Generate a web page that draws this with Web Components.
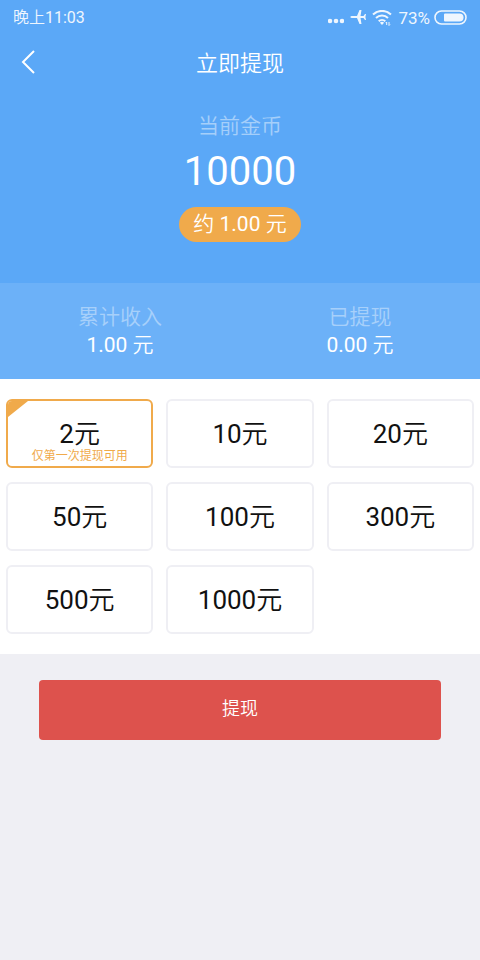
<!DOCTYPE html>
<html lang="zh-CN">
<head>
<meta charset="utf-8">
<meta name="viewport" content="width=device-width, initial-scale=1">
<title>立即提现</title>
<style>
  html { background: #efeff4; }
  body {
    margin: 0;
    font-family: Roboto, "Noto Sans CJK SC DemiLight", "Noto Sans CJK SC", sans-serif;
    color: #111;
    --blue: #5ba8f7;
    --blue-light: #6cb1f8;
    --orange: #f0aa4b;
    --line: #efeff4;
    --red: #dd524d;
  }
</style>
</head>
<body>
<withdraw-page></withdraw-page>
<script>
  function define(name, html, setup) {
    const template = document.createElement('template');
    template.innerHTML = html;
    customElements.define(name, class extends HTMLElement {
      constructor() {
        super();
        this.attachShadow({ mode: 'open' }).append(template.content.cloneNode(true));
      }
      connectedCallback() {
        if (setup) setup(this, this.shadowRoot);
      }
    });
  }

  define('status-bar', `
    <style>
      :host { display: flex; align-items: center; justify-content: space-between; height: 36px; padding: 0 13px; color: #fff; font-size: 16px; line-height: 20px; opacity: .9; }
      .icons { display: flex; align-items: center; gap: 6px; }
      .level { font-size: 17px; }
      svg { display: block; }
    </style>
    <span><slot></slot></span>
    <div class="icons">
      <svg width="16" height="16" viewBox="0 0 16 16" fill="#fff" aria-hidden="true"><circle cx="2" cy="11" r="2.300"/><circle cx="8" cy="11" r="2.300"/><circle cx="14" cy="11" r="2.300"/></svg>
      <svg width="16" height="16" viewBox="0 0 16 16" fill="#fff" aria-hidden="true"><path d="M0 7 1.500 6H7L9.500 0H11.500L10.500 6H13.500L15 4H16L15.400 7 16 10H15L13.500 8H10.500L11.500 14H9.500L7 8H1.500z"/></svg>
      <svg width="20" height="16" viewBox="0 0 20 16" fill="none" stroke="#fff" stroke-width="2" aria-hidden="true"><path d="M1 4.500a13 13 0 0 1 18 0M4 8a8.500 8.500 0 0 1 12 0M6.700 11.200a4.800 4.800 0 0 1 6.600 0"/><path d="m7.900 12.700 2.100 2.300 2.100-2.300a3 3 0 0 0-4.200 0z" fill="#fff" stroke="none"/><path d="M14.700 15v-3m-1 1 1-1M17 12v3.500m1-1-1 1" stroke-width="1"/></svg>
      <span class="level"><slot name="battery"></slot></span>
      <svg width="33" height="16" viewBox="0 0 33 16" aria-hidden="true" style="margin-left:-2px"><rect x="1" y="1" width="31" height="13" rx="6.500" fill="none" stroke="#fff" stroke-width="1.600"/><path d="M11 3.500h14.500a4 4 0 0 1 0 8H11a1 1 0 0 1-1-1v-6a1 1 0 0 1 1-1z" fill="#fff"/></svg>
    </div>
  `);

  define('title-bar', `
    <style>
      :host { display: grid; grid-template-columns: 56px 1fr 56px; align-items: center; height: 52px; color: #fff; }
      button { display: grid; place-items: center; width: 56px; height: 52px; padding: 0; border: 0; background: none; color: inherit; }
      h1 { margin: 0; padding-top: 4px; font-size: 22px; line-height: 32px; font-weight: 400; text-align: center; }
    </style>
    <button type="button" aria-label="返回"><svg width="14" height="24" viewBox="0 0 14 24" fill="none" stroke="currentColor" stroke-width="2"><path d="M13 1 2 12l11 11"/></svg></button>
    <h1><slot></slot></h1>
  `);

  define('coin-balance', `
    <style>
      :host { display: flex; flex-direction: column; align-items: center; padding: 22px 0 41px; color: #fff; }
      .label { font-size: 21px; line-height: 32px; font-weight: 300; opacity: .45; }
      .coins { font-size: 40px; line-height: 48px; margin: 6px 0 11px; }
      .worth { padding: 0 14px; border-radius: 18px; background: var(--orange); font-size: 21px; line-height: 35px; }
    </style>
    <span class="label"><slot name="label"></slot></span>
    <span class="coins"><slot></slot></span>
    <span class="worth"><slot name="worth"></slot></span>
  `);

  define('stat-item', `
    <style>
      :host { flex: 1; display: flex; flex-direction: column; align-items: center; font-size: 21px; line-height: 28px; color: #fff; }
      .label { font-weight: 300; opacity: .4; }
    </style>
    <span class="label"><slot name="label"></slot></span>
    <span><slot></slot></span>
  `);

  define('stat-row', `
    <style>
      :host { display: flex; padding: 20px 0; background: var(--blue-light); }
    </style>
    <slot></slot>
  `);

  define('amount-picker', `
    <style>
      :host { display: block; background: #fff; padding: 20px 6px; }
      fieldset { display: grid; grid-template-columns: repeat(3, 1fr); gap: 14px 13px; margin: 0; padding: 0; border: 0; min-width: 0; }
      label { position: relative; display: grid; place-items: center; box-sizing: border-box; height: 69px; border: 2px solid var(--line); border-radius: 6px; overflow: hidden; font-size: 26px; line-height: 36px; cursor: pointer; }
      input { position: absolute; inset: 0; width: 100%; height: 100%; margin: 0; appearance: none; outline: 0; }
      small { position: absolute; inset: auto 0 2px; text-align: center; font-size: 12px; line-height: 16px; color: var(--orange); font-family: Roboto, "Noto Sans CJK SC", sans-serif; }
      label:has(input:checked) { border-color: var(--orange); }
      label:has(input:checked)::before { content: ""; position: absolute; top: 0; left: 0; width: 20px; height: 16px; background: var(--orange); clip-path: polygon(0 0, 100% 0, 0 100%); }
    </style>
    <fieldset aria-label="提现金额"></fieldset>
  `, (host, root) => {
    const set = root.querySelector('fieldset');
    if (set.children.length) return;
    host.getAttribute('amounts').split(',').forEach((amount, i) => {
      const label = document.createElement('label');
      label.innerHTML = `<input type="radio" name="amount" value="${amount}"${i ? '' : ' checked'}><span>${amount}元</span>`
        + (i ? '' : `<small>${host.getAttribute('note')}</small>`);
      set.append(label);
    });
  });

  define('submit-button', `
    <style>
      :host { display: block; padding: 26px 39px; }
      button { display: block; width: 100%; height: 60px; padding: 0 0 2px; border: 0; border-radius: 4px; background: var(--red); color: #fff; font: inherit; font-size: 18px; line-height: 28px; cursor: pointer; }
    </style>
    <button type="button"><slot></slot></button>
  `);

  define('withdraw-page', `
    <style>
      :host { display: block; min-height: 100vh; background: #efeff4; }
      header { background: var(--blue); }
    </style>
    <header>
      <status-bar>晚上11:03<span slot="battery">73%</span></status-bar>
      <title-bar>立即提现</title-bar>
      <coin-balance><span slot="label">当前金币</span>10000<span slot="worth">约 1.00 元</span></coin-balance>
    </header>
    <main>
      <stat-row>
        <stat-item><span slot="label">累计收入</span>1.00 元</stat-item>
        <stat-item><span slot="label">已提现</span>0.00 元</stat-item>
      </stat-row>
      <amount-picker amounts="2,10,20,50,100,300,500,1000" note="仅第一次提现可用"></amount-picker>
      <submit-button>提现</submit-button>
    </main>
  `);
</script>
</body>
</html>
